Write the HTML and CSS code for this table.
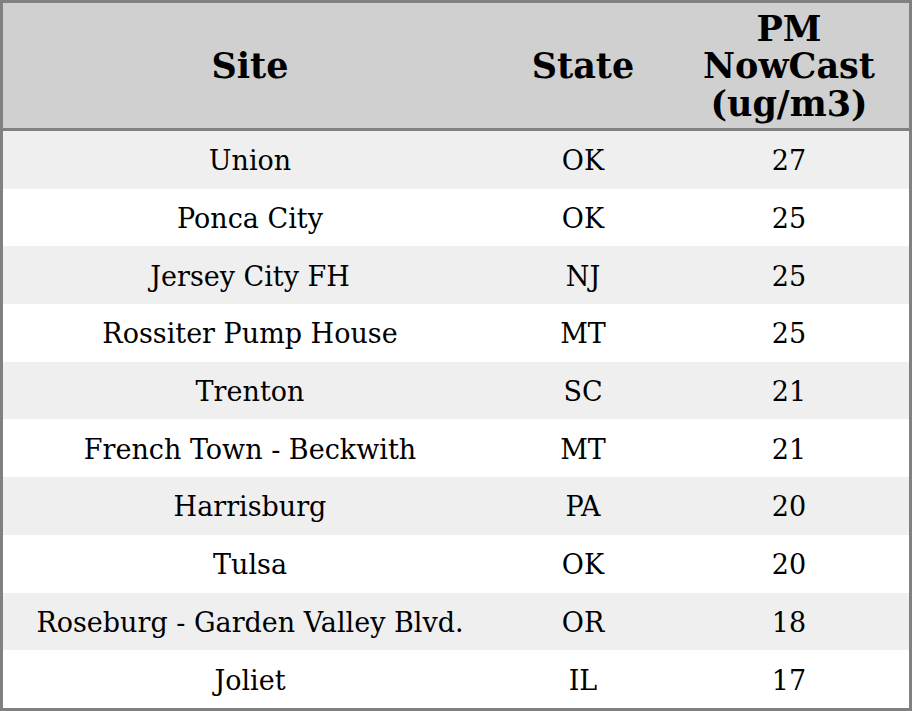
FILE: index.html
```html
<!DOCTYPE html>
<html>
<head>
<meta charset="utf-8">
<link rel="stylesheet" href="styles.css">
</head>
<body>
<table class="aq">
  <colgroup>
    <col class="c-site">
    <col class="c-state">
    <col class="c-pm">
  </colgroup>
  <thead>
    <tr><th>Site</th><th>State</th><th>PM<br>NowCast<br>(ug/m3)</th></tr>
  </thead>
  <tbody>
    <tr><td>Union</td><td>OK</td><td>27</td></tr>
    <tr><td>Ponca City</td><td>OK</td><td>25</td></tr>
    <tr><td>Jersey City FH</td><td>NJ</td><td>25</td></tr>
    <tr><td>Rossiter Pump House</td><td>MT</td><td>25</td></tr>
    <tr><td>Trenton</td><td>SC</td><td>21</td></tr>
    <tr><td>French Town - Beckwith</td><td>MT</td><td>21</td></tr>
    <tr><td>Harrisburg</td><td>PA</td><td>20</td></tr>
    <tr><td>Tulsa</td><td>OK</td><td>20</td></tr>
    <tr><td>Roseburg - Garden Valley Blvd.</td><td>OR</td><td>18</td></tr>
    <tr><td>Joliet</td><td>IL</td><td>17</td></tr>
  </tbody>
</table>
</body>
</html>
```
FILE: styles.css
```css
html, body {
  margin: 0;
  padding: 0;
  background: #ffffff;
}
.aq {
  width: 912px;
  border-collapse: separate;
  border-spacing: 0;
  border: 3px solid #808080;
  table-layout: fixed;
  font-family: "DejaVu Serif", serif;
  color: #000;
}
.c-site { width: 494px; }
.c-state { width: 172px; }
.c-pm { width: 240px; }
.aq th {
  background: #d0d0d0;
  font-size: 35px;
  font-weight: bold;
  line-height: 37.5px;
  height: 124px;
  padding: 1px 0 0;
  text-align: center;
  vertical-align: middle;
  border-bottom: 3px solid #808080;
}
.aq td {
  font-size: 27px;
  height: 55.7px;
  padding: 2px 0 0;
  text-align: center;
  vertical-align: middle;
}
.aq tbody tr:nth-child(odd) td {
  background: #efefef;
}
```
